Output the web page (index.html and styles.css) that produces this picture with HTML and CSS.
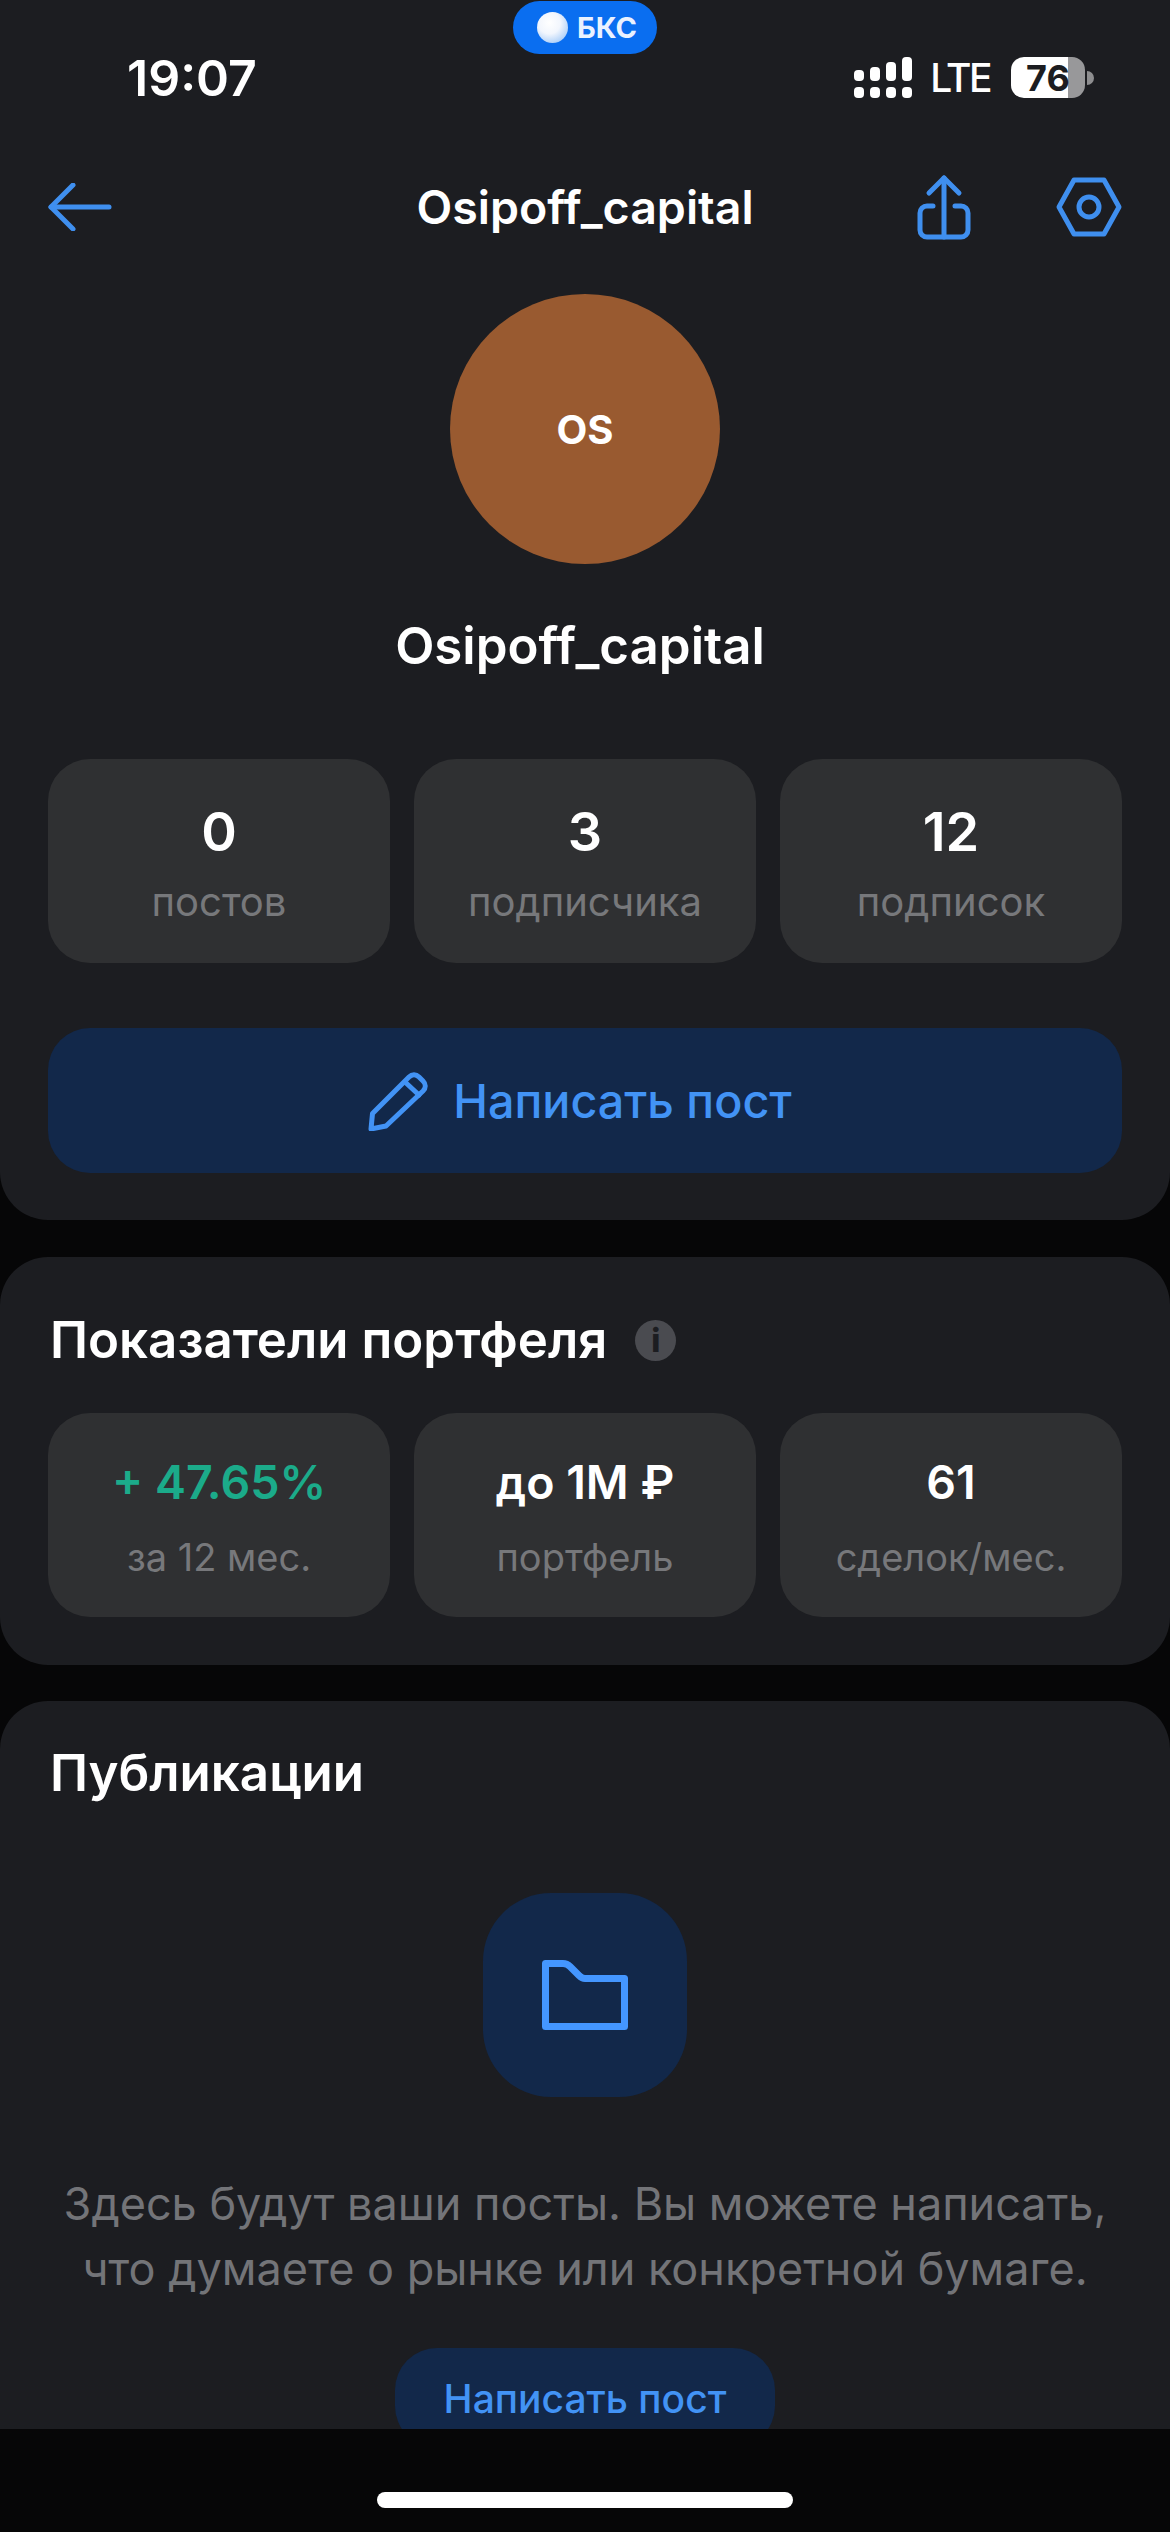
FILE: index.html
```html
<!DOCTYPE html>
<html lang="ru">
<head>
    <meta charset="UTF-8">
    <meta name="viewport" content="width=device-width, initial-scale=1.0">
    <title>Osipoff_capital</title>
    <link rel="stylesheet" href="styles.css">
</head>
<body>
    <div class="screen">
        <div class="island">
            <span class="island-ball"></span>
            <span class="island-text">БКС</span>
        </div>

        <section class="card card-profile">
            <!-- Статус-бар -->
            <div class="status-bar">
                <span class="time">19:07</span>
                <div class="status-right">
                    <svg class="signal" width="58" height="41" viewBox="0 0 58 41" fill="#fff">
                        <rect x="0" y="13" width="10" height="11" rx="4"/>
                        <rect x="16" y="10" width="10" height="14" rx="4"/>
                        <rect x="32" y="5" width="10" height="19" rx="4"/>
                        <rect x="48" y="0" width="10" height="24" rx="4"/>
                        <rect x="0" y="30" width="10" height="11" rx="4"/>
                        <rect x="16" y="30" width="10" height="11" rx="4"/>
                        <rect x="32" y="30" width="10" height="11" rx="4"/>
                        <rect x="48" y="30" width="10" height="11" rx="4"/>
                    </svg>
                    <span class="lte">LTE</span>
                    <div class="battery"><span>76</span></div>
                    <span class="battery-nub"></span>
                </div>
            </div>

            <!-- Навигация -->
            <nav class="nav">
                <svg class="nav-back" width="64" height="48" viewBox="0 0 64 48" fill="none" stroke="#3f8fef" stroke-width="5" stroke-linecap="round" stroke-linejoin="round">
                    <path d="M25 2 3 24l22 22"/>
                    <path d="M3 24h58"/>
                </svg>
                <h1 class="nav-title">Osipoff_capital</h1>
                <div class="nav-actions">
                    <svg width="54" height="66" viewBox="0 0 54 66" fill="none" stroke="#3f8fef" stroke-width="5" stroke-linecap="round" stroke-linejoin="round">
                        <path d="M12 19 27 4l15 15"/>
                        <path d="M27 4v59"/>
                        <path d="M16 32H10a7 7 0 0 0-7 7v17a7 7 0 0 0 7 7h34a7 7 0 0 0 7-7V39a7 7 0 0 0-7-7h-6"/>
                    </svg>
                    <svg width="66" height="60" viewBox="0 0 66 60" fill="none" stroke="#3f8fef" stroke-width="5" stroke-linejoin="round">
                        <path d="M18 3h30l15 27-15 27H18L3 30z"/>
                        <circle cx="33" cy="30" r="10"/>
                    </svg>
                </div>
            </nav>

            <div class="avatar">OS</div>
            <h2 class="profile-name">Osipoff_capital</h2>

            <div class="tiles tiles-profile">
                <div class="tile">
                    <div class="tile-value">0</div>
                    <div class="tile-label">постов</div>
                </div>
                <div class="tile">
                    <div class="tile-value">3</div>
                    <div class="tile-label">подписчика</div>
                </div>
                <div class="tile">
                    <div class="tile-value">12</div>
                    <div class="tile-label">подписок</div>
                </div>
            </div>

            <button class="btn-write" type="button">
                <svg width="60" height="60" viewBox="0 0 60 60" fill="none" stroke="#4293f5" stroke-width="5" stroke-linejoin="round" stroke-linecap="round">
                    <path d="M4.5 42.5 41 6c3-3 7-3 10 0l4 4c3 3 3 7 0 10L18 55l-15 3z"/>
                    <path d="m37 11 14 13"/>
                </svg>
                <span>Написать пост</span>
            </button>
        </section>

        <section class="card card-stats">
            <div class="card-head">
                <h3 class="card-title">Показатели портфеля</h3>
                <span class="info-icon">i</span>
            </div>
            <div class="tiles">
                <div class="tile">
                    <div class="tile-value tile-value-sm green">+ 47.65%</div>
                    <div class="tile-label tile-label-far">за 12 мес.</div>
                </div>
                <div class="tile">
                    <div class="tile-value tile-value-sm">до 1М ₽</div>
                    <div class="tile-label tile-label-far">портфель</div>
                </div>
                <div class="tile">
                    <div class="tile-value tile-value-sm">61</div>
                    <div class="tile-label tile-label-far">сделок/мес.</div>
                </div>
            </div>
        </section>

        <section class="card card-posts">
            <h3 class="card-title">Публикации</h3>
            <div class="empty-icon">
                <svg width="86" height="70" viewBox="0 0 86 70" fill="none" stroke="#4496ff" stroke-width="7" stroke-linejoin="round">
                    <path d="M3.5 3.5H21c3 0 5 1 7 3l9 9c2 2 3 3 6 3h39.5v48H3.5z"/>
                </svg>
            </div>
            <p class="empty-text">Здесь будут ваши посты. Вы можете написать, что думаете о рынке или конкретной бумаге.</p>
            <button class="btn-small" type="button">Написать пост</button>
        </section>

        <footer class="home-bar">
            <span class="home-indicator"></span>
        </footer>
    </div>
</body>
</html>
```

FILE: styles.css
```css
/* Общие стили */
* {
    box-sizing: border-box;
}

body {
    margin: 0;
    padding: 0;
    background-color: #060607;
    font-family: Inter, "Noto Sans", sans-serif;
    color: #fff;
}

h1, h2, h3, p {
    margin: 0;
}

.screen {
    position: relative;
    width: 1170px;
    height: 2532px;
    overflow: hidden;
}

.card {
    background-color: #1c1d21;
    padding: 0 48px;
    border-radius: 48px;
}

/* Пилюля приложения */
.island {
    position: absolute;
    top: 1px;
    left: 513px;
    width: 144px;
    height: 53px;
    display: flex;
    align-items: center;
    gap: 9px;
    padding-left: 24px;
    background-color: #0a6ef0;
    border-radius: 27px;
}

.island-ball {
    width: 31px;
    height: 31px;
    border-radius: 50%;
    background: radial-gradient(circle at 40% 35%, #fff 0%, #f2f6fd 40%, #a9cdf8 80%, #6fa9f3 100%);
}

.island-text {
    font-size: 29px;
    font-weight: 700;
    color: #eaf2ff;
}

/* Статус-бар */
.status-bar {
    display: flex;
    justify-content: space-between;
    align-items: center;
    height: 41px;
    padding: 0 28px 0 79px;
}

.card-profile {
    padding-top: 57px;
    padding-bottom: 47px;
    border-radius: 0 0 48px 48px;
}

.time {
    font-size: 50px;
    font-weight: 600;
}

.status-right {
    display: flex;
    align-items: center;
}

.lte {
    margin-left: 18px;
    font-size: 39px;
    font-weight: 500;
    letter-spacing: -2.5px;
}

.battery {
    width: 74px;
    height: 41px;
    margin-left: 21px;
    display: flex;
    align-items: center;
    justify-content: center;
    border-radius: 13px;
    background: linear-gradient(90deg, #fff 77%, #98989a 77%);
    color: #1c1d21;
    font-size: 36px;
    font-weight: 700;
}

.battery-nub {
    width: 7px;
    height: 14px;
    margin-left: 2px;
    background-color: #8e8e90;
    border-radius: 0 7px 7px 0;
}

/* Навигация */
.nav {
    display: grid;
    grid-template-columns: 1fr auto 1fr;
    align-items: center;
    height: 66px;
    margin-top: 76px;
}

.nav-title {
    font-size: 46.5px;
    font-weight: 600;
}

.nav-actions {
    display: flex;
    justify-content: flex-end;
    align-items: center;
    gap: 85px;
}

.avatar {
    width: 270px;
    height: 270px;
    margin: 54px auto 0;
    display: flex;
    align-items: center;
    justify-content: center;
    border-radius: 50%;
    background-color: #995a30;
    font-size: 40px;
    font-weight: 700;
}

.profile-name {
    margin-top: 52px;
    padding-right: 10px;
    line-height: 60px;
    text-align: center;
    font-size: 51px;
    font-weight: 600;
}

/* Плитки */
.tiles {
    display: grid;
    grid-template-columns: repeat(3, 1fr);
    gap: 24px;
}

.tiles-profile {
    margin-top: 83px;
}

.tile {
    height: 204px;
    padding-top: 41px;
    text-align: center;
    background-color: #2f3032;
    border-radius: 42px;
}

.tile-value {
    font-size: 54px;
    line-height: 64px;
    font-weight: 600;
}

.tile-value-sm {
    font-size: 46.5px;
    line-height: 56px;
}

.green {
    color: #1bab8a;
}

.tile-label {
    margin-top: 13px;
    font-size: 40px;
    line-height: 50px;
    color: #77787b;
}

.tile-label-far {
    margin-top: 22px;
    font-size: 38px;
}

/* Кнопки */
.btn-write {
    width: 100%;
    height: 145px;
    margin-top: 65px;
    padding: 0 10px 0 0;
    display: flex;
    align-items: center;
    justify-content: center;
    gap: 25px;
    border: none;
    border-radius: 42px;
    background-color: #12284a;
    color: #4293f5;
    font-family: inherit;
    font-size: 46.7px;
    font-weight: 500;
}

.btn-small {
    display: block;
    width: 380px;
    height: 100px;
    margin: 47px auto 0;
    border: none;
    border-radius: 42px;
    background-color: #12284a;
    color: #4293f5;
    font-family: inherit;
    font-size: 39px;
    font-weight: 500;
}

/* Показатели */
.card-stats {
    height: 408px;
    margin-top: 37px;
    padding-top: 53px;
}

.card-head {
    display: flex;
    align-items: center;
    gap: 28px;
    margin-bottom: 43px;
}

.card-title {
    padding-left: 2px;
    font-size: 51px;
    line-height: 60px;
    font-weight: 600;
}

.info-icon {
    width: 41px;
    height: 41px;
    display: flex;
    align-items: center;
    justify-content: center;
    border-radius: 50%;
    background-color: #4a4b50;
    color: #1c1d21;
    font-size: 32px;
    font-weight: 800;
}

/* Публикации */
.card-posts {
    height: 728px;
    margin-top: 36px;
    padding-top: 42px;
    overflow: hidden;
    border-radius: 48px 48px 0 0;
}

.empty-icon {
    width: 204px;
    height: 204px;
    margin: 90px auto 0;
    display: flex;
    align-items: center;
    justify-content: center;
    background-color: #12284a;
    border-radius: 68px;
}

.empty-text {
    margin: 74px -20px 0;
    font-size: 45px;
    line-height: 65px;
    text-align: center;
    color: #737478;
}

.home-bar {
    height: 103px;
    padding-top: 63px;
    background-color: #060607;
}

.home-indicator {
    display: block;
    width: 416px;
    height: 16px;
    margin: 0 auto;
    background-color: #fff;
    border-radius: 8px;
}
```
